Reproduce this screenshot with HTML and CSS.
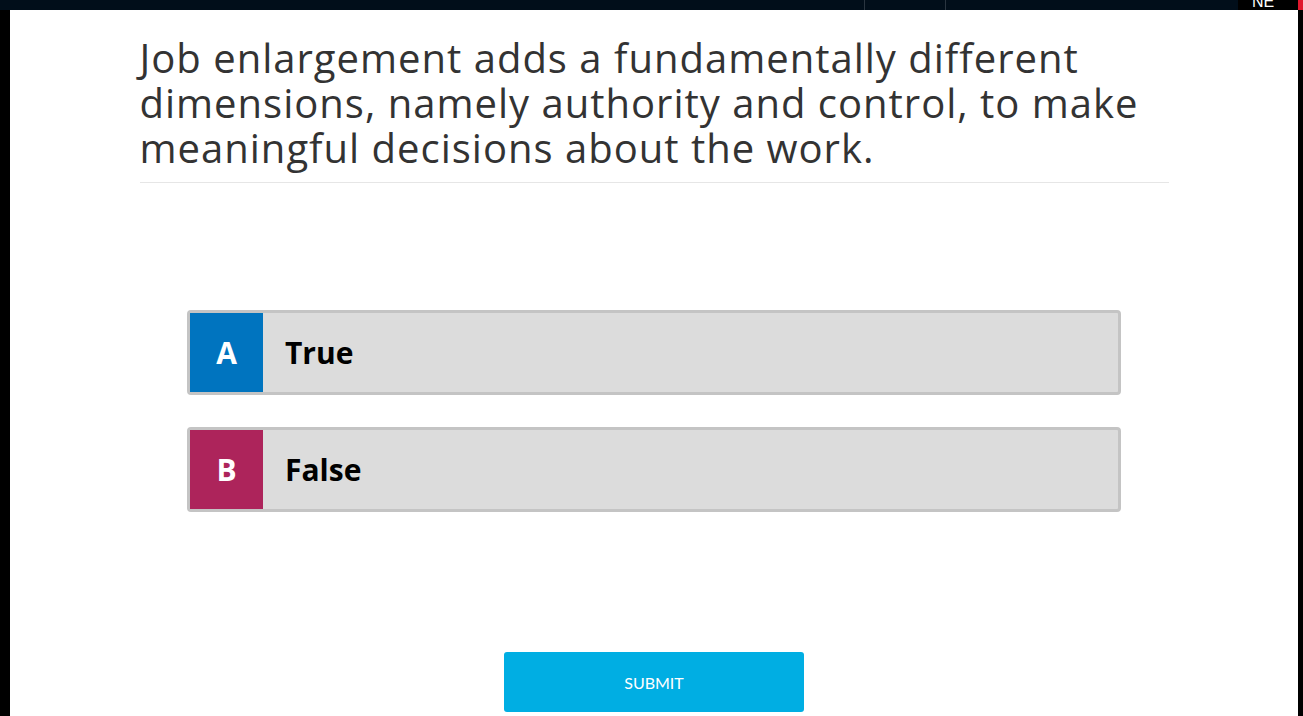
FILE: index.html
```html
<!DOCTYPE html>
<html>
<head>
<meta charset="utf-8">
<link rel="stylesheet" href="styles.css">
</head>
<body>
<div class="topbar">
  <div class="seg seg-main"></div>
  <div class="seg seg-mid"></div>
  <div class="seg seg-rest"></div>
  <div class="seg seg-name">NE</div>
  <div class="seg seg-red"></div>
</div>
<div class="frame">
  <div class="page">
    <div class="container">
      <h1 class="question">Job enlargement adds a fundamentally different dimensions, namely authority and control, to make meaningful decisions about the work.</h1>
      <div class="answers">
        <div class="answer">
          <div class="letter letter-a">A</div>
          <div class="label">True</div>
        </div>
        <div class="answer">
          <div class="letter letter-b">B</div>
          <div class="label">False</div>
        </div>
      </div>
      <div class="actions">
        <button class="submit">SUBMIT</button>
      </div>
    </div>
  </div>
</div>
</body>
</html>
```

FILE: styles.css
```css
html, body {
  margin: 0;
  padding: 0;
  background: #000;
  height: 716px;
  overflow: hidden;
}
body {
  font-family: "Open Sans", Lato, sans-serif;
}
.topbar {
  display: flex;
  height: 10px;
  background: #010e1a;
}
.seg { height: 10px; }
.seg-main { width: 864px; border-right: 1px solid #2a3540; }
.seg-mid { width: 80px; border-right: 1px solid #2a3540; }
.seg-rest { flex: 1; }
.seg-name {
  width: 60px;
  background: #000;
  color: #fff;
  font-size: 16px;
  line-height: 4px;
  overflow: hidden;
  padding-left: 14px;
  box-sizing: border-box;
  font-family: "Liberation Sans", sans-serif;
}
.seg-red { width: 5px; background: #e0182d; }
.frame {
  display: flex;
  padding-left: 10px;
  padding-right: 5px;
  height: 706px;
}
.page {
  flex: 1;
  background: #fff;
}
.container {
  width: 1029px;
  margin: 0 auto;
  padding-top: 25px;
}
.question {
  margin: 0;
  font-weight: 400;
  font-size: 40px;
  line-height: 45px;
  letter-spacing: 1px;
  color: #333;
  padding-bottom: 12px;
  border-bottom: 1px solid #e6e6e6;
}
.answers {
  width: 934px;
  margin: 127px auto 0;
  display: flex;
  flex-direction: column;
  gap: 32px;
}
.answer {
  display: flex;
  align-items: stretch;
  height: 79px;
  border: 3px solid #c4c4c4;
  border-radius: 4px;
  background: #dcdcdc;
}
.letter {
  width: 73px;
  display: flex;
  align-items: center;
  justify-content: center;
  color: #fff;
  font-weight: 700;
  font-size: 30px;
}
.letter-a { background: #0074bf; }
.letter-b { background: #ad245b; }
.label {
  display: flex;
  align-items: center;
  padding-left: 22px;
  font-weight: 700;
  font-size: 30px;
  color: #000;
}
.actions {
  display: flex;
  justify-content: center;
  margin-top: 140px;
}
.submit {
  width: 300px;
  height: 60px;
  border: none;
  border-radius: 3px;
  background: #00aee3;
  color: #fff;
  font-family: Lato, sans-serif;
  font-size: 16px;
  font-weight: 400;
}
```
